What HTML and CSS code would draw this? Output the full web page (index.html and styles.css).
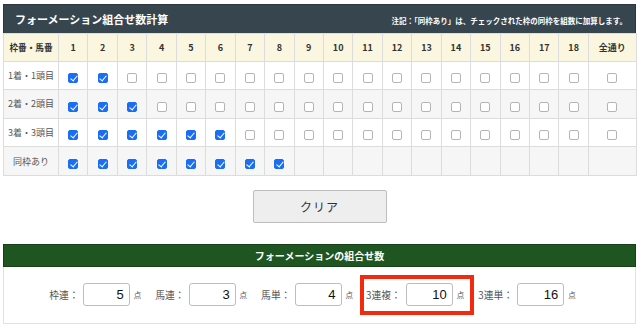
FILE: index.html
```html
<!DOCTYPE html>
<html lang="ja">
<head>
<meta charset="utf-8">
<link rel="stylesheet" href="styles.css">
</head>
<body>
<div class="wrap">
  <div class="calc">
    <div class="bar">
      <span class="title">フォーメーション組合せ数計算</span>
      <span class="note">注記：「同枠あり」は、チェックされた枠の同枠を組数に加算します。</span>
    </div>
    <table class="grid">
      <colgroup>
        <col class="c-label">
        <col span="18" class="c-num">
        <col class="c-all">
      </colgroup>
      <thead>
        <tr>
          <th>枠番・馬番</th>
          <th>1</th><th>2</th><th>3</th><th>4</th><th>5</th><th>6</th><th>7</th><th>8</th><th>9</th>
          <th>10</th><th>11</th><th>12</th><th>13</th><th>14</th><th>15</th><th>16</th><th>17</th><th>18</th>
          <th>全通り</th>
        </tr>
      </thead>
      <tbody id="rows"></tbody>
    </table>
  </div>

  <div class="actions">
    <button class="clear" type="button">クリア</button>
  </div>

  <div class="result">
    <div class="rbar">フォーメーションの組合せ数</div>
    <div class="rbody">
      <div class="item"><span class="lbl">枠連：</span><span class="box">5</span><span class="pt">点</span></div>
      <div class="item"><span class="lbl">馬連：</span><span class="box">3</span><span class="pt">点</span></div>
      <div class="item"><span class="lbl">馬単：</span><span class="box">4</span><span class="pt">点</span></div>
      <div class="item hl"><span class="lbl">3連複：</span><span class="box">10</span><span class="pt">点</span></div>
      <div class="item"><span class="lbl">3連単：</span><span class="box">16</span><span class="pt">点</span></div>
    </div>
  </div>
</div>
<script src="script.js"></script>
</body>
</html>
```

FILE: script.js
```js
(function () {
  var rows = [
    { label: "1着・1頭目", cls: "lg", checked: 2, count: 19 },
    { label: "2着・2頭目", cls: "lg", checked: 3, count: 19 },
    { label: "3着・3頭目", cls: "lg", checked: 6, count: 19 },
    { label: "同枠あり", cls: "lp", checked: 8, count: 8 }
  ];
  var tb = document.getElementById("rows");
  rows.forEach(function (r, ri) {
    var tr = document.createElement("tr");
    tr.className = ri % 2 ? "odd" : "even";
    var th = document.createElement("td");
    th.className = "label " + r.cls;
    th.textContent = r.label;
    tr.appendChild(th);
    for (var i = 0; i < 19; i++) {
      var td = document.createElement("td");
      if (i < r.count) {
        var cb = document.createElement("input");
        cb.type = "checkbox";
        cb.className = "cb";
        if (i < r.checked) cb.checked = true;
        td.appendChild(cb);
      } else {
        td.className = "empty";
      }
      tr.appendChild(td);
    }
    tb.appendChild(tr);
  });
})();
```

FILE: styles.css
```css
* { box-sizing: border-box; }
html, body { margin: 0; padding: 0; background: #fff; }
body {
  font-family: "Noto Sans CJK JP", "Noto Sans", sans-serif;
  color: #333;
}
.wrap { padding: 4px 4px 0 3px; width: 640px; }

.bar {
  height: 29px;
  background: #37454e;
  color: #fff;
  display: flex;
  align-items: center;
  justify-content: space-between;
  padding: 0 8px 0 11px;
  border: 1px solid #2c363d;
  border-bottom: none;
}
.title { font-size: 11px; font-weight: 700; }
.note { font-size: 7.5px; font-weight: 700; padding-top: 2px; }

.grid {
  width: 633px;
  border-collapse: collapse;
  table-layout: fixed;
}
.c-label { width: 55px; }
.c-num { width: 29.44px; }
.c-all { width: 48px; }

.grid th, .grid td {
  border: 1px solid #dcdcdc;
  text-align: center;
  padding: 0;
}
.grid thead th {
  height: 27.6px;
  background: #fbf6df;
  font-size: 9px;
  font-weight: 700;
  color: #333;
}
.grid thead th:first-child { font-size: 8.6px; }
.grid tbody td { height: 28.6px; }
.grid tbody tr.even td { background: #fff; }
.grid tbody tr.odd td { background: #f6f6f6; }
.grid tbody td.empty { background: #f1f1f1; }
.grid tbody td.label {
  font-size: 9px;
  color: #555;
}
.grid tbody td.lg { background: #e1f1dd; }
.grid tbody td.lp { background: #f8e1e1; }

.cb {
  -webkit-appearance: none;
  appearance: none;
  width: 10px;
  height: 10px;
  margin: 0;
  border: 1px solid #b5b5b5;
  border-radius: 2px;
  background: #fff;
  vertical-align: middle;
  position: relative;
  display: inline-block;
}
.cb:checked {
  background: #1a6ef5;
  border-color: #1a6ef5;
}
.cb:checked::after {
  content: "";
  position: absolute;
  left: 2.5px;
  top: 0px;
  width: 3px;
  height: 6px;
  border: solid #fff;
  border-width: 0 1.6px 1.6px 0;
  transform: rotate(40deg);
}

.actions {
  display: flex;
  justify-content: center;
  padding-top: 14px;
}
.clear {
  width: 134px;
  height: 33px;
  background: #eeeeee;
  border: 1px solid #bdbdbd;
  border-radius: 2px;
  font-family: "Noto Sans CJK JP", sans-serif;
  font-size: 12px;
  color: #333;
  letter-spacing: 1px;
  padding: 0;
}

.result { margin-top: 21px; width: 633px; }
.rbar {
  height: 23px;
  background: #1e5521;
  border: 1px solid #173f19;
  color: #fff;
  font-size: 10px;
  font-weight: 700;
  display: flex;
  align-items: center;
  justify-content: center;
}
.rbody {
  height: 57px;
  border: 1px solid #e2e2e2;
  border-top: none;
  display: flex;
  align-items: center;
  justify-content: center;
  gap: 14px;
  padding-right: 14px;
}
.item {
  display: flex;
  align-items: center;
  font-size: 9.8px;
  color: #555;
}
.lbl { margin-right: 4px; }
.box {
  width: 47px;
  height: 23px;
  border: 1px solid #bdbdbd;
  border-radius: 3px;
  background: #fff;
  font-family: "Liberation Sans", Arial, sans-serif;
  font-size: 13px;
  color: #111;
  text-align: right;
  padding-right: 5px;
  line-height: 21px;
}
.pt { font-size: 7.5px; margin-left: 4px; color: #555; }
.item.hl {
  outline: 4px solid #f22a10;
  outline-offset: 0;
  padding: 4.5px 6px 4.5px 2px;
  margin: 0 -6px 0 -3px;
}
.item.hl .lbl { margin-right: 5px; }
```
